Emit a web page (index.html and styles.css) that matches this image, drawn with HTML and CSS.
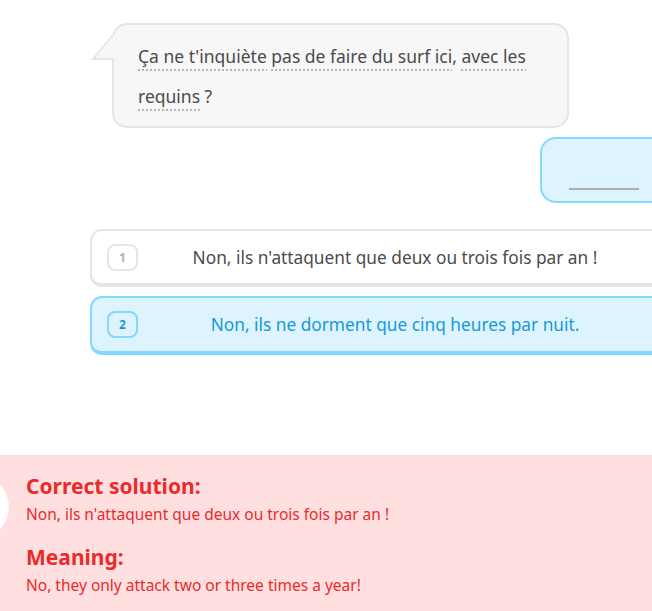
FILE: index.html
```html
<!DOCTYPE html>
<html lang="fr">
<head>
<meta charset="utf-8">
<title>Challenge</title>
<link rel="stylesheet" href="styles.css">
</head>
<body>
<div class="session">
  <div class="prompt-row">
    <div class="bubble">
      <p class="bubble-text"><span class="tok">Ça ne t'inquiète</span> <span class="tok">pas de faire du surf ici</span>, <span class="tok">avec les</span> <span class="tok">requins</span> ?</p>
    </div>
  </div>
  <div class="answer-row">
    <div class="answer-box"><span class="blank"></span></div>
  </div>
  <div class="options">
    <div class="option">
      <span class="key">1</span>
      <span class="option-text">Non, ils n'attaquent que deux ou trois fois par an !</span>
    </div>
    <div class="option selected">
      <span class="key">2</span>
      <span class="option-text">Non, ils ne dorment que cinq heures par nuit.</span>
    </div>
  </div>
  <div class="feedback">
    <span class="feedback-icon"></span>
    <h2 class="fb-title">Correct solution:</h2>
    <p class="fb-text">Non, ils n'attaquent que deux ou trois fois par an !</p>
    <h2 class="fb-title fb-second">Meaning:</h2>
    <p class="fb-text">No, they only attack two or three times a year!</p>
  </div>
</div>
</body>
</html>
```

FILE: styles.css
```css
html, body {
  margin: 0;
  padding: 0;
  background: #fff;
}
body {
  font-family: "Noto Sans", "Open Sans", sans-serif;
  color: #4b4b4b;
  overflow: hidden;
}
.session {
  width: 652px;
  height: 611px;
  overflow: hidden;
  position: relative;
  display: flex;
  flex-direction: column;
}
.prompt-row {
  padding: 23px 0 0 112px;
  display: flex;
}
.bubble {
  position: relative;
  background: #f7f7f7;
  border: 2px solid #e5e5e5;
  border-radius: 15px;
  padding: 11px 20px 10px 24px;
  box-sizing: border-box;
  width: 457px;
}
.bubble::before {
  content: "";
  position: absolute;
  left: -23px;
  top: 10px;
  width: 0;
  height: 0;
  border-style: solid;
  border-width: 0 0 25px 21px;
  border-color: transparent transparent #e5e5e5 transparent;
}
.bubble::after {
  content: "";
  position: absolute;
  left: -19px;
  top: 10px;
  width: 0;
  height: 0;
  border-style: solid;
  border-width: 0 0 23px 19px;
  border-color: transparent transparent #f7f7f7 transparent;
}
.bubble-text {
  margin: 0;
  font-size: 17.5px;
  line-height: 40px;
  color: #4b4b4b;
}
.tok {
  padding-bottom: 3px;
  background-image: linear-gradient(to right, #b5b5b5 50%, transparent 50%);
  background-size: 4px 2px;
  background-repeat: repeat-x;
  background-position: left bottom;
}
.answer-row {
  margin-top: 9px;
  padding-left: 540px;
  display: flex;
}
.answer-box {
  flex: none;
  width: 200px;
  height: 66px;
  box-sizing: border-box;
  background: #ddf4ff;
  border: 2px solid #84d8ff;
  border-radius: 16px;
  display: flex;
  align-items: flex-end;
  padding: 0 0 11px 27px;
}
.blank {
  display: block;
  width: 70px;
  height: 2px;
  background: #afafaf;
}
.options {
  margin-top: 26px;
  padding-left: 90px;
  display: flex;
  flex-direction: column;
  gap: 9px;
}
.option {
  flex: none;
  width: 610px;
  height: 58px;
  box-sizing: border-box;
  border: 2px solid #e5e5e5;
  border-bottom-width: 4px;
  border-radius: 12px;
  background: #fff;
  display: flex;
  align-items: center;
  padding: 0 15px;
}
.option.selected {
  height: 59px;
  background: #ddf4ff;
  border-color: #84d8ff;
}
.key {
  flex: none;
  width: 31px;
  height: 27px;
  box-sizing: border-box;
  border: 2px solid #e5e5e5;
  border-radius: 8px;
  display: flex;
  align-items: center;
  justify-content: center;
  font-size: 12px;
  font-weight: 700;
  color: #afafaf;
}
.selected .key {
  border-color: #84d8ff;
  color: #1899d6;
}
.option-text {
  flex: 1;
  text-align: center;
  font-size: 17.3px;
  color: #4b4b4b;
  margin-left: -31px;
}
.selected .option-text {
  color: #1899d6;
}
.feedback {
  margin-top: auto;
  height: 156px;
  box-sizing: border-box;
  background: #ffdfe0;
  padding: 18px 0 0 26px;
  position: relative;
}
.feedback-icon {
  position: absolute;
  left: -55px;
  top: 20px;
  width: 64px;
  height: 64px;
  border-radius: 50%;
  background: #fff;
}
.fb-title {
  margin: 0;
  font-size: 21px;
  line-height: 26px;
  font-weight: 700;
  color: #ea2b2b;
}
.fb-second {
  margin-top: 20px;
}
.fb-text {
  margin: 5px 0 0;
  font-size: 15.5px;
  line-height: 20px;
  color: #ea2b2b;
}
```
